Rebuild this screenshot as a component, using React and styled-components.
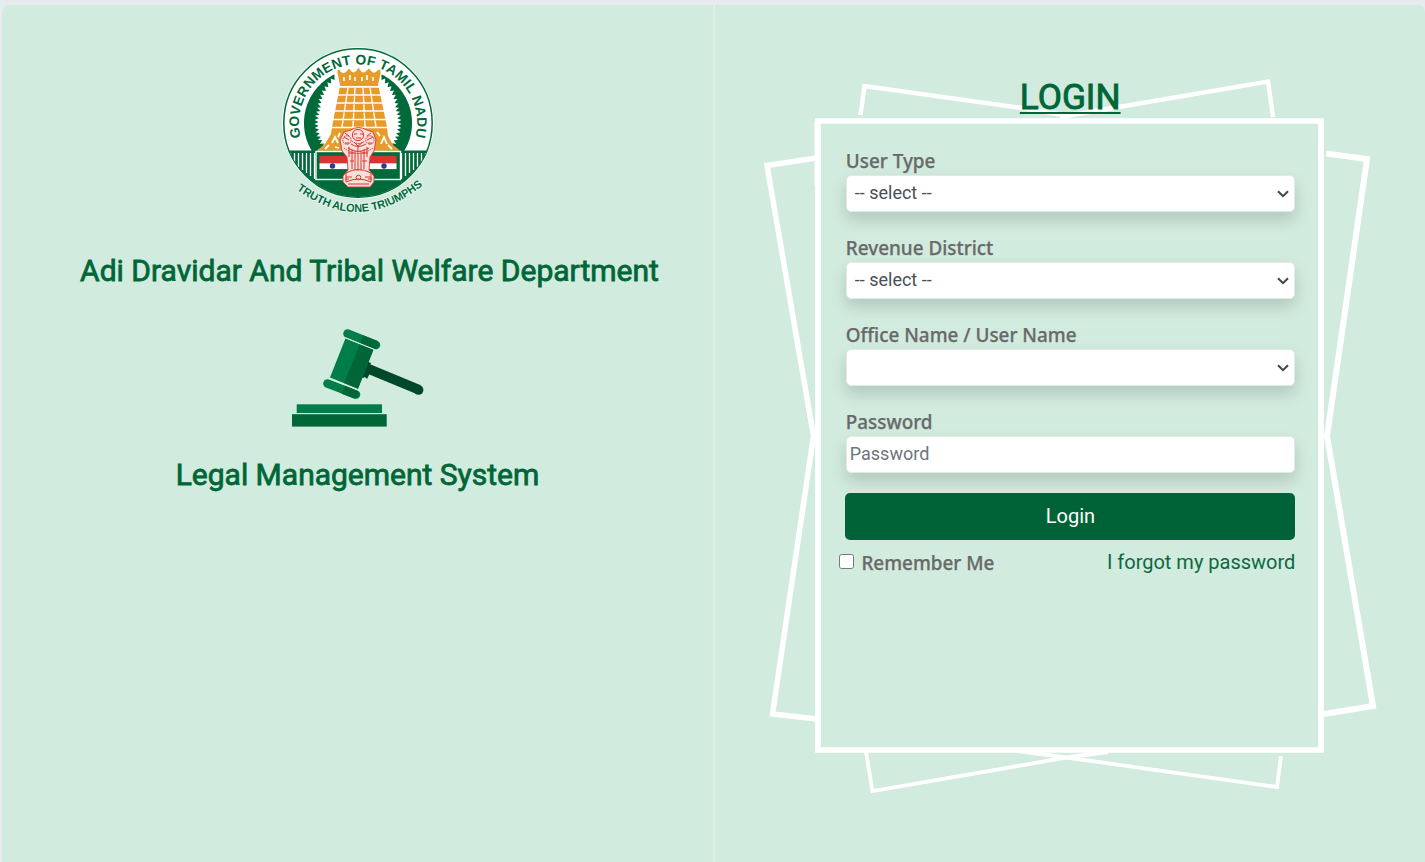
import React from "react";
import styled, { createGlobalStyle } from "styled-components";

const Global = createGlobalStyle`
  *, *::before, *::after { box-sizing: border-box; }
  body { margin: 0; background: #e7ebee; font-family: Roboto, "Liberation Sans", sans-serif; overflow: hidden; }
`;

const Page = styled.main`
  display: grid;
  grid-template-columns: 713px 1fr;
  height: 862px;
  padding: 5px 0 0 2px;
  background: #e7ebee;
`;

const Brand = styled.section`
  background: #d1ebde;
  border-right: 2px solid #dfeee6;
  border-top-left-radius: 8px;
  display: flex;
  flex-direction: column;
  align-items: center;
`;

const EmblemImage = styled.svg`
  display: block;
  width: 160px;
  height: 176px;
  margin: 38px 0 0 0;
  flex: none;
`;

const Heading = styled.h2`
  margin: ${(p) => p.$top}px 0 0;
  padding-left: ${(p) => p.$shift || 0}px;
  font-size: 30px;
  line-height: 36px;
  font-weight: 400;
  -webkit-text-stroke: 0.8px #006638;
  color: #006638;
  white-space: nowrap;
`;

const GavelImage = styled.svg`
  display: block;
  width: 140px;
  height: 104px;
  margin-top: 37px;
  flex: none;
`;

const LoginSide = styled.section`
  position: relative;
  background: #d1ebde;
  border-top-right-radius: 8px;
  padding: 68px 130px 0;
  display: flex;
  flex-direction: column;
`;

const Frames = styled.svg`
  position: absolute;
  left: 0;
  top: -5px;
  width: 710px;
  height: 862px;
  pointer-events: none;
`;

const Title = styled.h1`
  position: relative;
  align-self: center;
  margin: 0;
  font-size: 35.2px;
  line-height: 49px;
  height: 48px;
  font-weight: 400;
  -webkit-text-stroke: 0.9px #006638;
  color: #006638;
  text-decoration: underline;
  text-decoration-thickness: 2px;
  text-underline-offset: 3px;
  text-decoration-skip-ink: none;
`;

const Form = styled.form`
  position: relative;
  width: 450px;
  margin: 28px 0 0 0.4px;
  display: flex;
  flex-direction: column;
`;

const Field = styled.div`
  display: flex;
  flex-direction: column;
  height: 87px;
  padding: 0 0.4px;
`;

const Label = styled.label`
  font-family: "Noto Sans", "Open Sans", sans-serif;
  font-size: 18.9px;
  line-height: 24px;
  height: 26px;
  font-weight: 500;
  -webkit-text-stroke: 0.25px #696969;
  color: #696969;
  white-space: nowrap;
`;

const Control = styled.div`
  display: flex;
  align-items: center;
  justify-content: space-between;
  height: 37px;
  padding: 0 5px 2px ${(p) => p.$left}px;
  border: 1px solid #e2e9e6;
  border-radius: 5px;
  background: #fff;
  box-shadow: 0 8px 16px rgba(0, 0, 0, 0.15);
  color: ${(p) => (p.$muted ? "#6c757d" : "#495057")};
  font-size: 18px;
  line-height: 24px;
`;

const Chevron = styled.svg`
  width: 12px;
  height: 8px;
  margin-left: auto;
  margin-top: 3px;
`;

const Submit = styled.button`
  height: 47px;
  margin: -4px 0 0;
  padding: 0 0 1px;
  border: 0;
  border-radius: 5px;
  background: #006338;
  color: #fff;
  font: 400 20px/45px Roboto, sans-serif;
`;

const Options = styled.div`
  display: flex;
  align-items: center;
  height: 44px;
  margin-left: -6px;
`;

const Check = styled.input`
  width: 15px;
  height: 15px;
  margin: 0 7px 1px 0;
`;

const RememberLabel = styled(Label)`
  padding-top: 2px;
`;

const Forgot = styled.a`
  margin-left: auto;
  color: #0b6a40;
  font-size: 20px;
  line-height: 24px;
`;

const INK = "#006a3a";

function wreath(side) {
  const steps = 36;
  const outer = [];
  const inner = [];
  for (let i = 0; i <= steps; i++) {
    const deg = -34 + (i * 98) / steps;
    const a = (deg * Math.PI) / 180;
    const taper = deg > 20 ? ((deg - 20) / 44) * 10 : 0;
    const rIn = (i % 2 ? 39.5 : 43.5) + taper;
    outer.push([80 + side * 54 * Math.cos(a), 80 - 54 * Math.sin(a)]);
    inner.unshift([80 + side * rIn * Math.cos(a), 80 - rIn * Math.sin(a)]);
  }
  return outer.concat(inner).map((p) => p.map((n) => n.toFixed(1)).join(",")).join(" ");
}

const TOWER_ROWS = [
  [43.8, 24], [52, 25], [60, 26], [68, 27], [76.5, 28], [84.5, 30],
];

function Emblem() {
  return (
    <EmblemImage viewBox="0 0 160 176" role="img" aria-label="Government of Tamil Nadu">
      <defs>
        <path id="ring" d="M22.7 94.4 A59 59 0 1 1 137.3 94.4" />
        <path id="motto" d="M18.5 146.5 Q82 193 144 143" />
        <clipPath id="disc"><circle cx="80" cy="80" r="74" /></clipPath>
      </defs>
      <circle cx="80" cy="80" r="75.8" fill="#fff" />
      <circle cx="80" cy="80" r="74.2" fill="#fff" stroke={INK} strokeWidth="1.5" />
      <polygon points={wreath(-1)} fill={INK} />
      <polygon points={wreath(1)} fill={INK} />
      <g clipPath="url(#disc)">
        <rect x="0" y="107.5" width="160" height="60" fill={INK} />
        {[12.5, 16.5, 20.5, 24.5, 28.5, 32.5, 36.5].map((x, i) => (
          <g key={x} stroke="#fff" strokeWidth="1.3">
            <path d={`M${x} 110V${118 + i * 3}`} />
            <path d={`M${160 - x} 110V${118 + i * 3}`} />
          </g>
        ))}
      </g>
      <g fill="#e79c2a">
        <path d="M59.5 30Q59 26 61.5 27Q64 32 68 29L71 25.5L74 29Q77 31 80.5 24.5Q84 31 87 29L91 25.5L94 29Q97 31 100 27Q103 25 102.5 31L99.5 44H62.5Z" />
        <path d="M62 43H100.5L109 84L110 93L115 102L122 107.5H39L47 101L53 91L54 84Z" />
      </g>
      <g stroke="#fff" fill="none">
        {TOWER_ROWS.map(([y, w]) => <path key={y} d={`M${80.5 - w} ${y}H${80.5 + w}`} strokeWidth="1.7" />)}
        <path d="M70 45L64 84M77 45L75 84M85 45L87 84M92 45L98 84" strokeWidth="1.4" strokeDasharray="7 1.2" />
        <path d="M66 34V38M72 32V37M77 34V38M84 34V38M89 32V37M95 34V38" strokeWidth="1.6" />
        <path d="M54 100L57 94L60 100M103 101L106 94L109 101M47 106L51 102M114 106L110 102M62 90L60 94M99 89L102 93M57 104L61 105" strokeWidth="1.8" />
      </g>
      <rect x="38" y="108.5" width="84.5" height="28" fill={INK} stroke="#fff" strokeWidth="1.4" />
      <rect x="41.5" y="112.8" width="77" height="7.5" fill="#d9342f" />
      <rect x="41.5" y="120.3" width="77" height="6" fill="#fff" />
      <rect x="41.5" y="126.3" width="77" height="6.5" fill={INK} />
      <circle cx="54.5" cy="123" r="2.7" fill="#303891" />
      <circle cx="106" cy="123" r="2.7" fill="#303891" />
      <g transform="translate(1 3)">
        <path d="M72 84Q79 79 88 84L94 86L97 94L95 105L91 111L90 124L95 130V136L91 141H69L64 136V130L69 124L68 111L63 105L61 94L65 86Z" fill="#f9dfda" stroke="#d93632" strokeWidth="0.9" />
        <g stroke="#d93632" fill="none" strokeWidth="1">
          <circle cx="79" cy="89" r="5.6" />
          <circle cx="68" cy="94" r="4.2" strokeDasharray="1.6 0.7" />
          <circle cx="91" cy="94" r="4.2" strokeDasharray="1.6 0.7" />
          <path d="M75 88H78M81 88H84M77 92H82M65 91L70 94M66 97H70M88 94L94 91M89 97H93M72 98Q79 103 87 98M69 102Q79 109 90 102M66 87L70 90M92 87L88 90" />
          <path d="M65 102Q79 113 94 102M73 95Q79 100 86 95" strokeDasharray="1.5 0.8" />
          <path d="M70 101V111M73 103V123M76 105V124M79 100V125M82 105V124M85 103V123M88 101V111M70 107H75M83 107H89M71 115H75M83 115H88M75 96L79 100L84 96" />
          <path d="M67 127Q79 120 92 127V136Q79 130 67 136ZM67 131H73M86 131H92M69 138H90M66 133H70M89 133H93" />
          <circle cx="79.5" cy="131.5" r="2.3" />
        </g>
      </g>
      <g fill={INK} fontFamily="Liberation Sans, sans-serif" fontWeight="700">
        <text fontSize="13.8"><textPath href="#ring" textLength="213">GOVERNMENT OF TAMIL NADU</textPath></text>
        <text fontSize="11.2" stroke="#eef8f2" strokeWidth="1.6" paintOrder="stroke"><textPath href="#motto" textLength="138">TRUTH ALONE TRIUMPHS</textPath></text>
      </g>
    </EmblemImage>
  );
}

function Gavel() {
  return (
    <GavelImage viewBox="0 0 140 104" aria-hidden="true">
      <path d="M76 41L131 63.8" stroke="#00482a" strokeWidth="9.6" />
      <circle cx="130.6" cy="64" r="4.8" fill="#00482a" />
      <path d="M78 35L83 37L81 42L84 43L79 53L77 51L75 52L70 50Z" fill="#00482a" />
      <path d="M57.5 12.2L85.5 23.5L70 62.7L42 51.4Z" fill="#007d48" />
      <path d="M72 18L85.5 23.5L70 62.7L56 57Z" fill="#006638" />
      <path d="M59.5 7.5L88 19" stroke="#007d48" strokeWidth="8.6" strokeLinecap="round" />
      <path d="M75 9.2L89.6 15Q93 20 86.6 23L72 17.3Z" fill="#006638" />
      <path d="M39.5 57.5L68 68.5" stroke="#007d48" strokeWidth="8.6" strokeLinecap="round" />
      <path d="M57 59.6L69.6 64.5Q73 70 66.6 72.8L53.5 67.7Z" fill="#006638" />
      <path d="M56.5 11.5L87 23.8M41 52.6L71 64.4" stroke="#d1ebde" strokeWidth="1.1" />
      <rect x="8.7" y="78.3" width="85.3" height="8.7" fill="#007d48" />
      <rect x="4" y="88.2" width="94.7" height="12.4" fill="#006638" />
    </GavelImage>
  );
}

function BackFrames() {
  return (
    <Frames viewBox="715 0 710 862" aria-hidden="true">
      <g fill="none" stroke="#fff" strokeLinejoin="miter">
        <path d="M860.5 115L864.5 86L1022 108L1070 116" strokeWidth="4.5" />
        <path d="M1060 117L1268 81.5L1273 117" strokeWidth="4.5" />
        <path d="M816 158L767 165.5L813.5 436L772.5 714L817 719" strokeWidth="5.5" />
        <path d="M1326 153.5L1367 159L1327 436L1373 706L1324 714" strokeWidth="6" />
        <path d="M866 752L872.5 791L1070 757L1108 752" strokeWidth="3.8" />
        <path d="M1018 751L1070 758L1277 787L1281 756" strokeWidth="3.8" />
        <path d="M818 121V750H1321V121Z" strokeWidth="5.7" />
        <path d="M816 121V186" strokeWidth="3" />
      </g>
    </Frames>
  );
}

function SelectField({ label, value }) {
  return (
    <Field>
      <Label>{label}</Label>
      <Control $left={8}>
        {value}
        <Chevron viewBox="0 0 12 8"><path d="M1 1.2L6 6.2L11 1.2" fill="none" stroke="#3f474e" strokeWidth="2" /></Chevron>
      </Control>
    </Field>
  );
}

export default function App() {
  return (
    <>
      <Global />
      <Page>
        <Brand>
          <Emblem />
          <Heading $top={34} $shift={24}>Adi Dravidar And Tribal Welfare Department</Heading>
          <Gavel />
          <Heading $top={27}>Legal Management System</Heading>
        </Brand>
        <LoginSide>
          <BackFrames />
          <Title>LOGIN</Title>
          <Form>
            <SelectField label="User Type" value="-- select --" />
            <SelectField label="Revenue District" value="-- select --" />
            <SelectField label="Office Name / User Name" value="" />
            <Field>
              <Label>Password</Label>
              <Control $left={3} $muted>Password</Control>
            </Field>
            <Submit type="button">Login</Submit>
            <Options>
              <Check type="checkbox" id="remember" />
              <RememberLabel htmlFor="remember">Remember Me</RememberLabel>
              <Forgot>I forgot my password</Forgot>
            </Options>
          </Form>
        </LoginSide>
      </Page>
    </>
  );
}
